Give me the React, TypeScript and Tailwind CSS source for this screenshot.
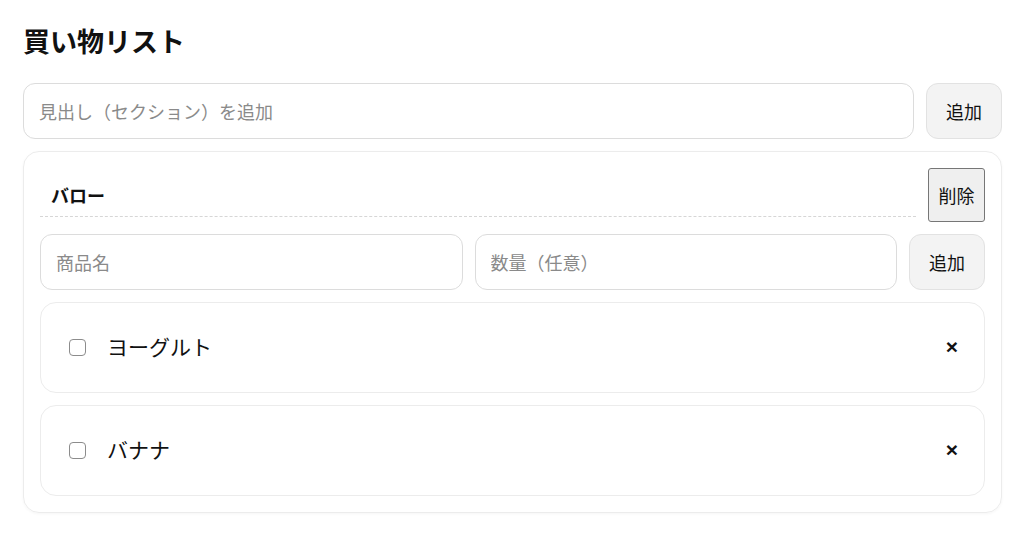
import React, { useState } from 'react';

type Item = { id: number; name: string; done: boolean };

const font = { fontFamily: '"Noto Sans CJK JP", "Noto Sans", sans-serif' };

const App = () => {
  const [items, setItems] = useState<Item[]>([
    { id: 1, name: 'ヨーグルト', done: false },
    { id: 2, name: 'バナナ', done: false },
  ]);

  const toggle = (id: number) =>
    setItems(items.map((it) => (it.id === id ? { ...it, done: !it.done } : it)));
  const remove = (id: number) => setItems(items.filter((it) => it.id !== id));

  return (
    <div className="min-h-[543px] bg-white pl-[23px] pr-[22px] pt-[24px] text-[#111]" style={font}>
      <h1 className="text-[27px] font-bold leading-[34px] mb-[25px]">買い物リスト</h1>

      <div className="flex gap-3 mb-3">
        <input
          className="flex-1 h-14 rounded-xl border border-[#dcdcdc] px-[15px] text-[18px] placeholder:text-[#8a8a8a] outline-none"
          placeholder="見出し（セクション）を追加"
        />
        <button className="w-[76px] h-14 rounded-xl border border-[#e2e2e2] bg-[#f3f3f3] text-[18px]">
          追加
        </button>
      </div>

      <section className="rounded-2xl border border-[#ececec] p-4 flex flex-col gap-3 shadow-[0_1px_3px_rgba(0,0,0,0.04)]">
        <div className="flex items-center gap-3">
          <h2 className="flex-1 border-b border-dashed border-[#d6d6d6] px-[11px] py-3 text-[18px] font-bold leading-[18px]">
            バロー
          </h2>
          <button className="w-[57px] h-[54px] rounded-[3px] border border-[#767676] bg-[#efefef] text-[18px]">
            削除
          </button>
        </div>

        <div className="flex gap-3">
          <input
            className="flex-1 min-w-0 h-14 rounded-xl border border-[#dcdcdc] px-[15px] text-[18px] placeholder:text-[#8a8a8a] outline-none"
            placeholder="商品名"
          />
          <input
            className="flex-1 min-w-0 h-14 rounded-xl border border-[#dcdcdc] px-[15px] text-[18px] placeholder:text-[#8a8a8a] outline-none"
            placeholder="数量（任意）"
          />
          <button className="w-[76px] h-14 rounded-xl border border-[#e2e2e2] bg-[#f3f3f3] text-[18px]">
            追加
          </button>
        </div>

        {items.map((it) => (
          <div
            key={it.id}
            className="flex items-center h-[91px] rounded-2xl border border-[#ececec] pl-[28px] pr-[22px]"
          >
            <input
              type="checkbox"
              checked={it.done}
              onChange={() => toggle(it.id)}
              className="appearance-none w-[17px] h-[17px] m-0 rounded-[4px] border-[1.5px] border-[#8c8c8c] bg-white checked:bg-[#555]"
            />
            <span className="ml-[21px] flex-1 text-[21px] leading-[28px] pb-[4px]">{it.name}</span>
            <button
              onClick={() => remove(it.id)}
              className="px-1 text-[21px] font-bold leading-none pb-[2px]"
              style={{ fontFamily: '"Liberation Sans", sans-serif' }}
            >
              ×
            </button>
          </div>
        ))}
      </section>
    </div>
  );
};

export default App;
